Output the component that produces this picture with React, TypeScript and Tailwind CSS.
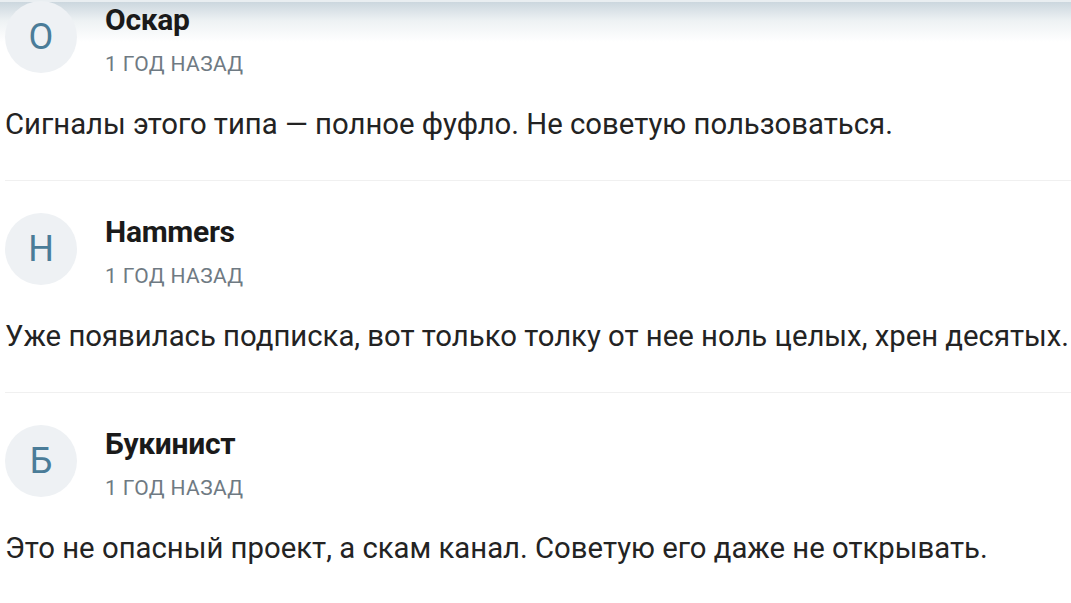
import React from 'react';

interface Comment {
  id: number;
  author: string;
  initial: string;
  time: string;
  text: string;
}

const comments: Comment[] = [
  { id: 1, author: 'Оскар', initial: 'О', time: '1 год назад', text: 'Сигналы этого типа — полное фуфло. Не советую пользоваться.' },
  { id: 2, author: 'Hammers', initial: 'H', time: '1 год назад', text: 'Уже появилась подписка, вот только толку от нее ноль целых, хрен десятых.' },
  { id: 3, author: 'Букинист', initial: 'Б', time: '1 год назад', text: 'Это не опасный проект, а скам канал. Советую его даже не открывать.' },
];

function CommentItem({ c, last }: { c: Comment; last: boolean }) {
  return (
    <div className={last ? '' : 'pb-[42px] border-b border-[#f0f0f0]'}>
      <div className="flex items-start h-[74px]">
        <div className="w-[72px] h-[72px] rounded-full bg-[#eef1f4] flex items-center justify-center shrink-0">
          <span className="text-[36px] leading-none text-[#4a7c98]">{c.initial}</span>
        </div>
        <div className="ml-[28px] pt-[4px]">
          <div className="text-[30px] leading-[30px] font-bold text-[#1a1a1a] tracking-[-0.3px]">{c.author}</div>
          <div className="mt-[19px] text-[21px] leading-[21px] font-normal uppercase text-[#6f7a83] tracking-[0.4px]">{c.time}</div>
        </div>
      </div>
      <p className="mt-[35px] text-[29.3px] leading-[28px] text-[#232323] whitespace-nowrap">{c.text}</p>
    </div>
  );
}

export default function App() {
  return (
    <div className="relative w-[1071px] h-[603px] overflow-hidden bg-white" style={{ fontFamily: 'Roboto, "Noto Sans", sans-serif' }}>
      <div className="absolute inset-x-0 top-0 h-[42px] bg-gradient-to-b from-[#c8d4dc] via-[#eef2f4] to-white" />
      <div className="absolute inset-x-0 top-0 h-[2px] bg-[#e9eef1]" />
      <div className="relative pl-[5px] pt-[1px]">
        {comments.map((c, i) => (
          <div key={c.id} className={i > 0 ? 'pt-[32px]' : ''}>
            <CommentItem c={c} last={i === comments.length - 1} />
          </div>
        ))}
      </div>
    </div>
  );
}
